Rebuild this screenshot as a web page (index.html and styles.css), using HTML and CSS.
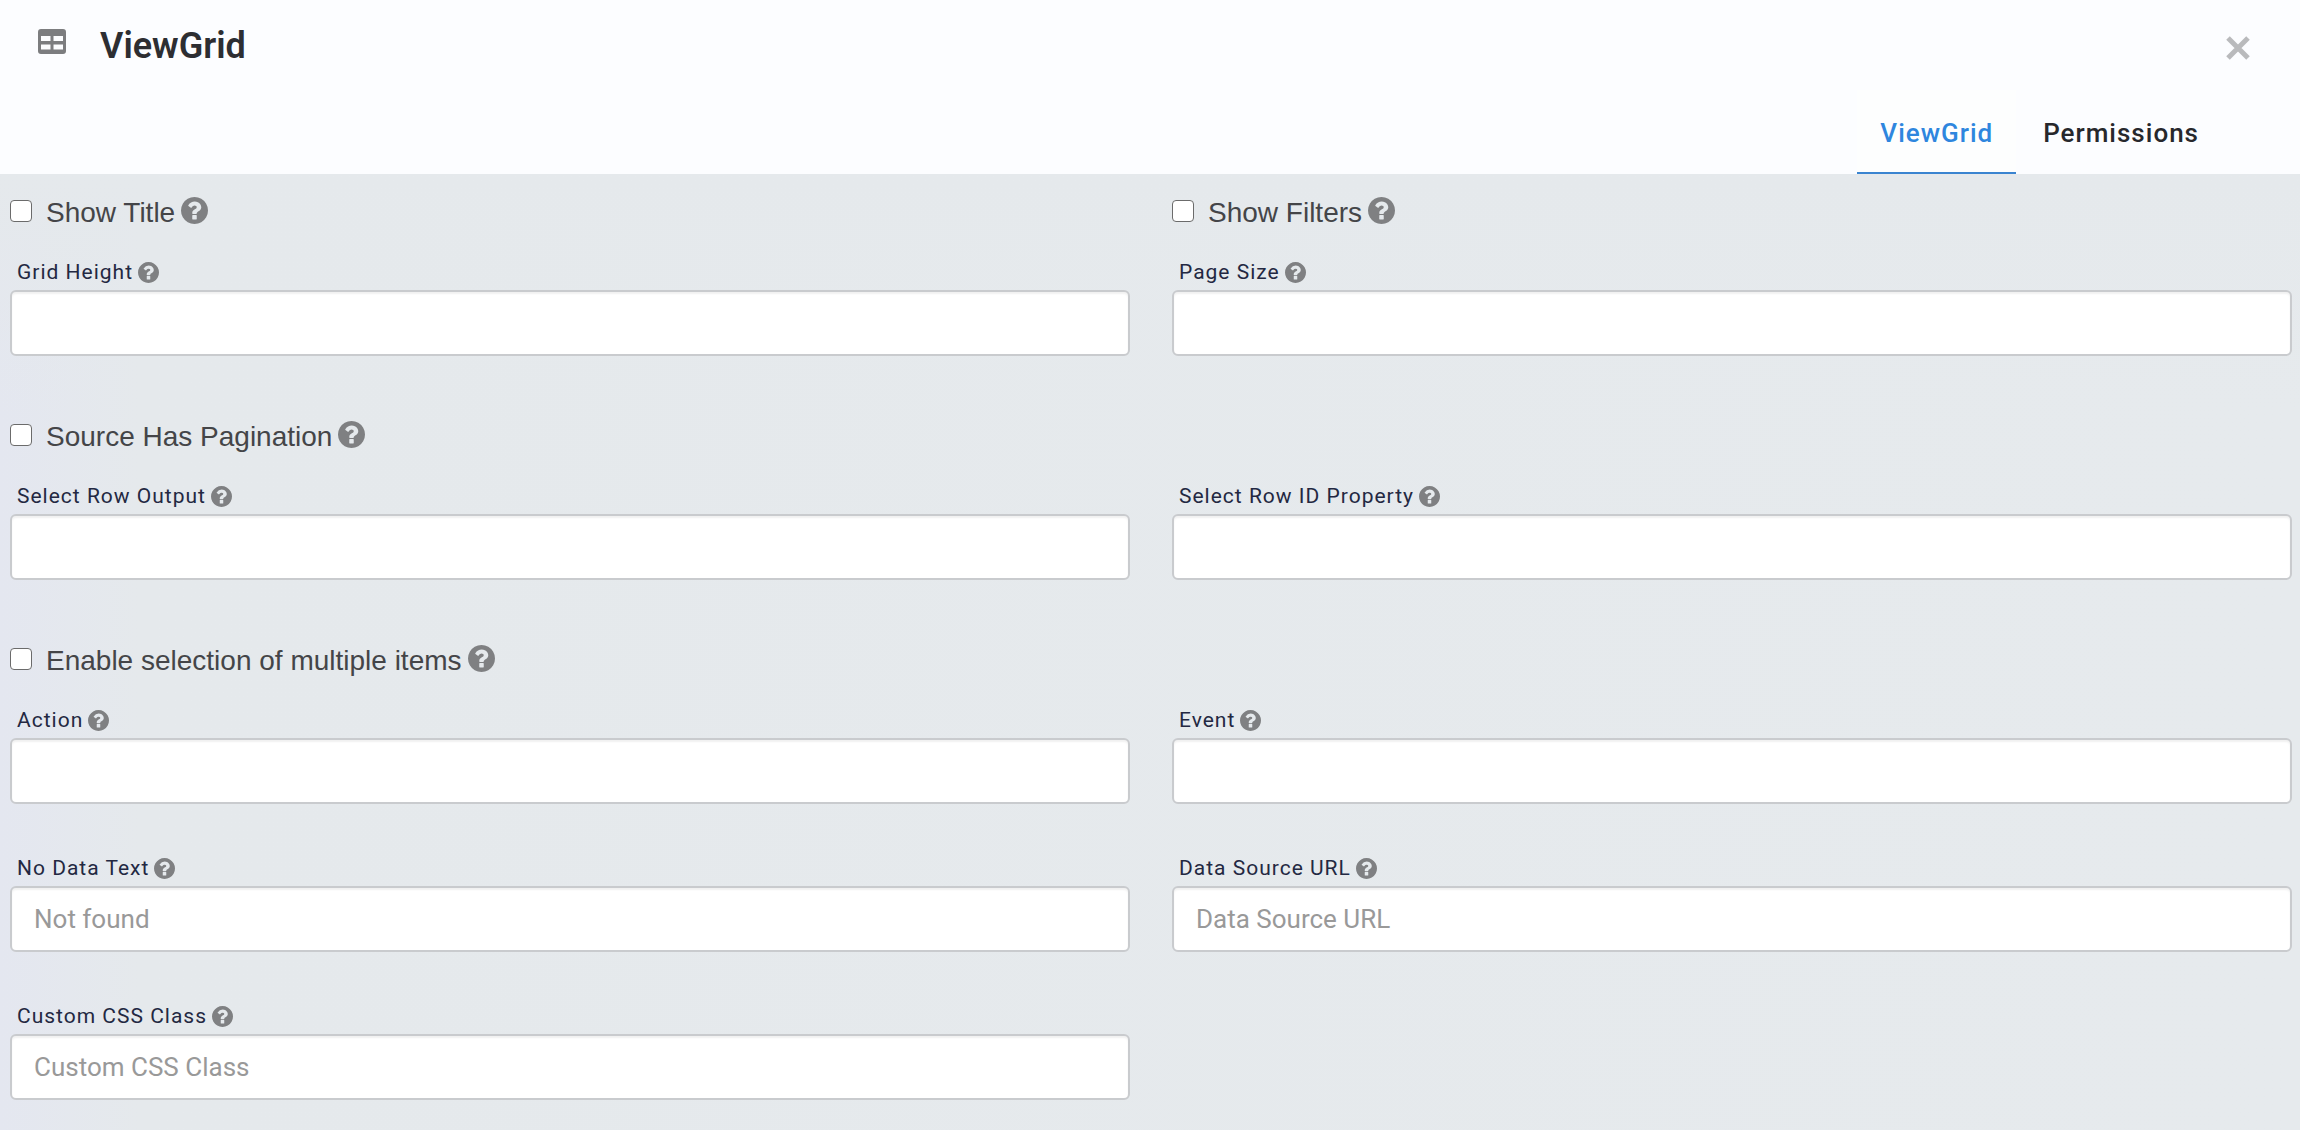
FILE: index.html
```html
<!DOCTYPE html>
<html lang="en">
<head>
<meta charset="utf-8">
<meta name="viewport" content="width=device-width, initial-scale=1">
<title>ViewGrid</title>
<link rel="stylesheet" href="styles.css">
</head>
<body>
<svg class="sprite" aria-hidden="true">
  <symbol id="help" viewBox="128 128 1536 1536">
    <path d="M1024 1376v-192q0-14-9-23t-23-9H800q-14 0-23 9t-9 23v192q0 14 9 23t23 9h192q14 0 23-9t9-23zm256-672q0-88-55.5-163T1086 425t-170-41q-243 0-371 213-15 24 8 42l132 100q7 6 19 6 16 0 25-12 53-68 86-92 34-24 86-24 48 0 85.5 26t37.5 59q0 38-20 61t-68 45q-63 28-115.5 86.5T768 1020v36q0 14 9 23t23 9h192q14 0 23-9t9-23q0-19 21.5-49.5T1100 957q32-18 49-28.5t46-35 44.5-48 28-60.5 12.5-81zm384 192q0 209-103 385.5T1281.500 1561 896 1664t-385.500-103T231 1281.500 128 896t103-385.500T510.500 231 896 128t385.500 103T1561 510.500 1664 896z"/>
  </symbol>
</svg>

<header class="header">
  <div class="title-row">
    <svg class="title-icon" viewBox="0 0 28 25" aria-hidden="true">
      <path fill-rule="evenodd" d="M3 0h22a3 3 0 0 1 3 3v19a3 3 0 0 1-3 3H3a3 3 0 0 1-3-3V3a3 3 0 0 1 3-3zM3 7v5h9.500V7zM15.500 7v5H25V7zM3 15.500v5h9.500v-5zM15.500 15.500v5H25v-5z"/>
    </svg>
    <h1 class="title">ViewGrid</h1>
    <button class="close" type="button" aria-label="Close">
      <svg class="close-icon" viewBox="0 0 24 24" aria-hidden="true"><path d="M2 2l20 20M22 2L2 22"/></svg>
    </button>
  </div>
  <nav class="tabs">
    <a class="tab tab-active" href="#viewgrid">ViewGrid</a>
    <a class="tab" href="#permissions">Permissions</a>
  </nav>
</header>

<main class="content">
  <form class="form">
    <div class="check"><input class="box" type="checkbox" id="show-title"><label for="show-title">Show Title</label><svg class="help-lg" aria-hidden="true"><use href="#help"/></svg></div>
    <div class="check"><input class="box" type="checkbox" id="show-filters"><label for="show-filters">Show Filters</label><svg class="help-lg" aria-hidden="true"><use href="#help"/></svg></div>

    <div class="field">
      <div class="caption"><label for="grid-height">Grid Height</label><svg class="help-sm" aria-hidden="true"><use href="#help"/></svg></div>
      <input class="input" type="text" id="grid-height">
    </div>
    <div class="field">
      <div class="caption"><label for="page-size">Page Size</label><svg class="help-sm" aria-hidden="true"><use href="#help"/></svg></div>
      <input class="input" type="text" id="page-size">
    </div>

    <div class="check check-wide"><input class="box" type="checkbox" id="pagination"><label for="pagination">Source Has Pagination</label><svg class="help-lg" aria-hidden="true"><use href="#help"/></svg></div>

    <div class="field">
      <div class="caption"><label for="row-output">Select Row Output</label><svg class="help-sm" aria-hidden="true"><use href="#help"/></svg></div>
      <input class="input" type="text" id="row-output">
    </div>
    <div class="field">
      <div class="caption"><label for="row-id">Select Row ID Property</label><svg class="help-sm" aria-hidden="true"><use href="#help"/></svg></div>
      <input class="input" type="text" id="row-id">
    </div>

    <div class="check check-wide"><input class="box" type="checkbox" id="multiple"><label for="multiple">Enable selection of multiple items</label><svg class="help-lg" aria-hidden="true"><use href="#help"/></svg></div>

    <div class="field">
      <div class="caption"><label for="action">Action</label><svg class="help-sm" aria-hidden="true"><use href="#help"/></svg></div>
      <input class="input" type="text" id="action">
    </div>
    <div class="field">
      <div class="caption"><label for="event">Event</label><svg class="help-sm" aria-hidden="true"><use href="#help"/></svg></div>
      <input class="input" type="text" id="event">
    </div>
    <div class="field">
      <div class="caption"><label for="no-data">No Data Text</label><svg class="help-sm" aria-hidden="true"><use href="#help"/></svg></div>
      <input class="input" type="text" id="no-data" placeholder="Not found">
    </div>
    <div class="field">
      <div class="caption"><label for="source-url">Data Source URL</label><svg class="help-sm" aria-hidden="true"><use href="#help"/></svg></div>
      <input class="input" type="text" id="source-url" placeholder="Data Source URL">
    </div>
    <div class="field">
      <div class="caption"><label for="css-class">Custom CSS Class</label><svg class="help-sm" aria-hidden="true"><use href="#help"/></svg></div>
      <input class="input" type="text" id="css-class" placeholder="Custom CSS Class">
    </div>
  </form>
</main>
</body>
</html>
```
FILE: styles.css
```css
* { box-sizing: border-box; }

body {
  margin: 0;
  min-height: 100vh;
  display: flex;
  flex-direction: column;
  font-family: Roboto, "Liberation Sans", sans-serif;
  background: #e6eaed;
}

.sprite { display: none; }

.header {
  background: #fcfdff;
}

.title-row {
  display: flex;
  align-items: flex-start;
  height: 90px;
  padding: 24px 50px 0 38px;
}

.title-icon {
  width: 28px;
  height: 25px;
  margin-top: 5px;
  fill: #7c7d7f;
}

.title {
  flex: 1;
  margin: 0 0 0 34px;
  font-size: 36px;
  line-height: 44px;
  font-weight: 600;
  color: #2d2e32;
}

.close {
  display: flex;
  margin: 12px 0 0;
  padding: 0;
  border: 0;
  background: none;
  cursor: pointer;
}

.close-icon {
  width: 24px;
  height: 24px;
  fill: none;
  stroke: #b9babc;
  stroke-width: 5;
}

.tabs {
  display: flex;
  justify-content: flex-end;
  gap: 4px;
  padding-right: 78px;
}

.tab {
  height: 84px;
  padding: 27px 23px 0;
  font-size: 26px;
  line-height: 32px;
  font-weight: 500;
  letter-spacing: 1px;
  color: #27282c;
  text-decoration: none;
  border-bottom: 2px solid transparent;
}

.tab-active {
  color: #2e86de;
  background: #fdfefe;
  border-bottom-color: #3a84d0;
}

.content {
  flex: 1;
  padding: 20px 8px 0 10px;
  background:
    linear-gradient(to bottom, #e5e9ec, rgba(229, 233, 236, 0) 240px),
    linear-gradient(to right, #e4e7f0, #e5e9ec 140px, #e6eaed);
}

.form {
  display: grid;
  grid-template-columns: 1fr 1fr;
  column-gap: 42px;
}

.check {
  display: flex;
  align-items: flex-start;
  height: 64px;
  font-family: "Liberation Sans", Arial, sans-serif;
  font-size: 28px;
  line-height: 38px;
  color: #444548;
}

.field + .check { margin-top: 12px; }

.check-wide { grid-column: 1 / -1; }

.box {
  appearance: none;
  width: 22px;
  height: 22px;
  margin: 6px 14px 0 0;
  border: 1px solid #6b6b6b;
  border-radius: 4px;
  background: #fff;
}

.box:checked { background: #2e86de; }

.help-lg {
  width: 27px;
  height: 27px;
  margin: 3px 0 0 6px;
  fill: #7f8082;
}

.field {
  padding-bottom: 50px;
}

.field:last-child { padding-bottom: 24px; }

.caption {
  display: flex;
  align-items: center;
  height: 32px;
  padding: 0 0 4px 7px;
  font-size: 21px;
  letter-spacing: 1px;
  color: #232842;
}

.help-sm {
  width: 21px;
  height: 21px;
  margin-left: 5px;
  fill: #7f8082;
}

.input {
  display: block;
  width: 100%;
  height: 66px;
  padding: 0 22px;
  border: 2px solid #c9cbce;
  border-radius: 6px;
  background: #fff;
  box-shadow: inset 0 2px 2px rgba(0, 0, 0, 0.06);
  font-family: inherit;
  font-size: 26px;
  color: #333;
}

.input::placeholder { color: #999; opacity: 1; }
```
